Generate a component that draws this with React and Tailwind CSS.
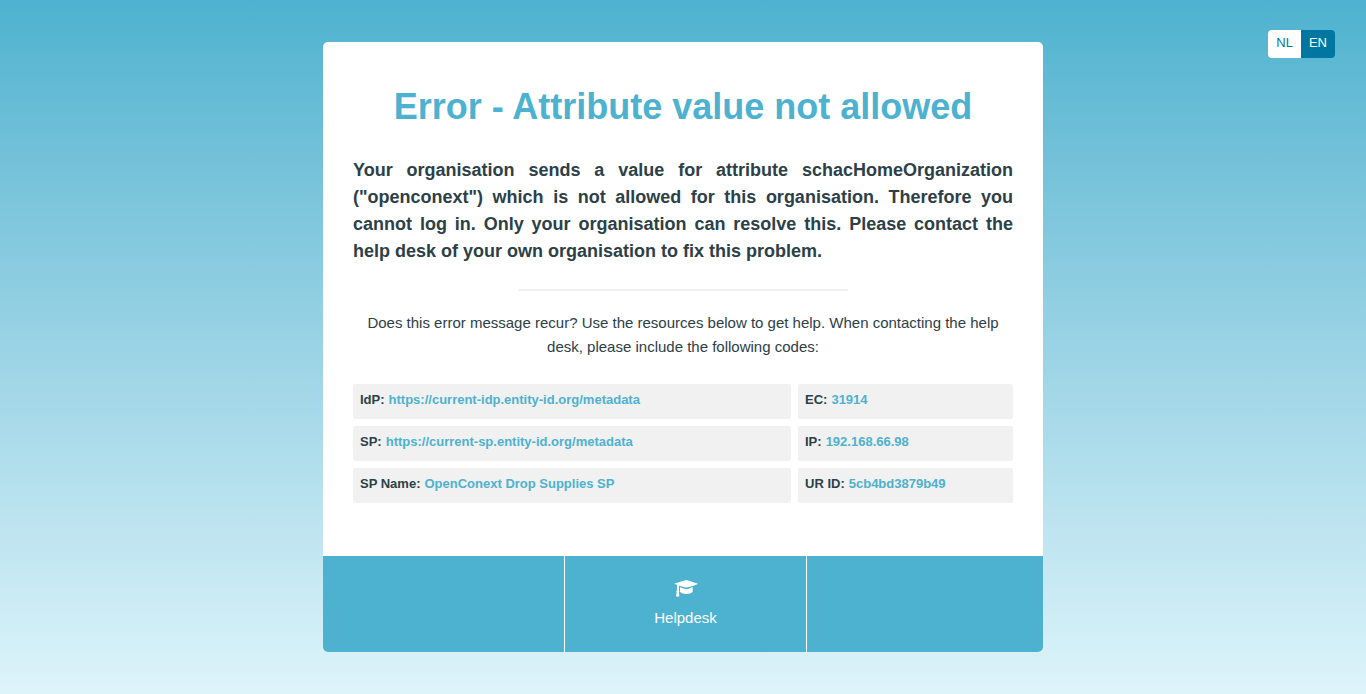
const codes = [
  ["IdP", "https://current-idp.entity-id.org/metadata"],
  ["EC", "31914"],
  ["SP", "https://current-sp.entity-id.org/metadata"],
  ["IP", "192.168.66.98"],
  ["SP Name", "OpenConext Drop Supplies SP"],
  ["UR ID", "5cb4bd3879b49"],
];

function CapIcon() {
  return (
    <svg viewBox="0 0 72 51" className="h-[17px] w-6" fill="currentColor" aria-hidden="true">
      <path d="M0 11 34 1Q37 0 40 1L72 11Q70 14 41 22Q37 23 33 22L15 17V31Q17 34 15 37L16 49Q10 51 6 49L8 37Q6 33 9 31V14Z" />
      <path d="M18 22 33 27Q37 28 41 27L56 21V36Q50 42 37 42Q24 42 18 36Z" />
    </svg>
  );
}

export default function App() {
  return (
    <div className="relative min-h-screen bg-linear-to-b from-[#4db2cf] to-[#ddf4fa] px-4 py-[42px] font-['Liberation_Sans',Arial,sans-serif] text-[#2c4048]">
      <nav aria-label="Language" className="absolute top-[30px] right-[31px] flex overflow-hidden rounded text-[13px] leading-[26px]">
        <button type="button" className="h-7 bg-white px-2 pb-0.5 text-[#0077a0]">NL</button>
        <button type="button" className="h-7 bg-[#0077a0] px-2 pb-0.5 text-white">EN</button>
      </nav>
      <div className="mx-auto max-w-[720px] overflow-hidden rounded-[5px] bg-white">
        <main className="px-[30px] pt-10 pb-[53px]">
          <h1 className="text-center text-[36px] leading-[50px] font-bold text-[#4db2cf]">Error - Attribute value not allowed</h1>
          <p className="mt-[25px] text-justify text-[18px] leading-[27px] font-bold">
            Your organisation sends a value for attribute schacHomeOrganization ("openconext") which is not allowed for this organisation. Therefore you cannot log in. Only your organisation can resolve this. Please contact the help desk of your own organisation to fix this problem.
          </p>
          <hr className="mx-auto mt-6 w-1/2 border-t-2 border-[#f1f1f1]" />
          <p className="mt-5 text-center text-[15px] leading-6">
            Does this error message recur? Use the resources below to get help. When contacting the help desk, please include the following codes:
          </p>
          <dl className="mt-[25px] grid grid-cols-[438fr_215fr] gap-[7px] text-[13px] leading-5 font-bold">
            {codes.map(([label, value]) => (
              <div key={label} className="flex min-h-[35px] gap-1 rounded-xs bg-[#f1f1f1] px-[7px] pt-[6px]">
                <dt>{label}:</dt>
                <dd className="text-[#4db2cf]">{value}</dd>
              </div>
            ))}
          </dl>
        </main>
        <footer className="grid h-24 grid-cols-[241fr_241fr_236fr] gap-px bg-white text-white">
          <div className="bg-[#4db2cf]" />
          <a href="#helpdesk" className="flex flex-col items-center gap-[9px] bg-[#4db2cf] pt-6 text-[15px] leading-6">
            <CapIcon />
            <span>Helpdesk</span>
          </a>
          <div className="bg-[#4db2cf]" />
        </footer>
      </div>
    </div>
  );
}
